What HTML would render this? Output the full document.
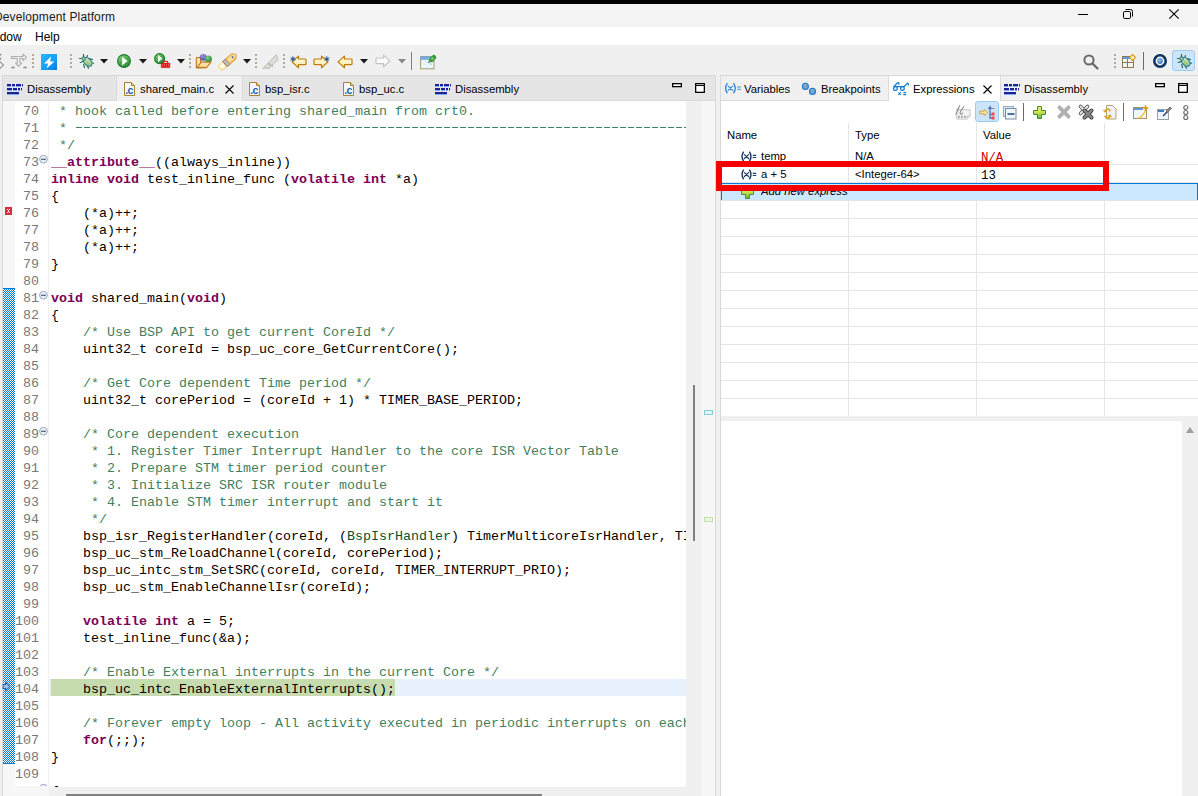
<!DOCTYPE html><html><head><meta charset="utf-8"><style>
*{margin:0;padding:0;box-sizing:border-box}
html,body{width:1198px;height:796px;overflow:hidden;background:#f0f0f0;font-family:"Liberation Sans",sans-serif;font-size:12px;color:#000;position:relative}
.a{position:absolute}
.tx{position:absolute;white-space:pre;line-height:14px;font-size:12px}
.cl{position:absolute;left:0;font-family:"Liberation Mono",monospace;font-size:13.3334px;line-height:17px;height:17px;white-space:pre}
.ln{color:#787878}
.k{color:#7f0055;font-weight:bold}
.c{color:#3f7f5f}
.t{color:#005032}
svg{position:absolute;overflow:visible}
</style></head><body>
<div class="a" style="left:0px;top:0px;width:1198px;height:4px;background:#000;"></div>
<div class="a" style="left:0px;top:4px;width:1198px;height:23px;background:#f3f3f3;"></div>
<div class="a" style="left:0px;top:27px;width:1198px;height:18px;background:#fff;"></div>
<div class="a" style="left:0px;top:45px;width:1198px;height:30px;background:#f0f0f0;"></div>
<div class="tx" style="left:-6px;top:10px;color:#1a1a1a;font-size:12px;letter-spacing:0.12px">Development Platform</div>
<svg style="left:1078px;top:14px;" width="10" height="1" viewBox="0 0 10 1"><rect x="0" y="0" width="10" height="1" fill="#000"/></svg>
<svg style="left:1123px;top:9px;" width="10" height="10" viewBox="0 0 10 10"><rect x="0.5" y="2.5" width="7" height="7" rx="1.3" fill="none" stroke="#000"/><path d="M2.5 0.5h5a2 2 0 0 1 2 2v5" fill="none" stroke="#000"/></svg>
<svg style="left:1169px;top:9px;" width="10" height="10" viewBox="0 0 10 10"><path d="M0.3 0.3L9.7 9.7M9.7 0.3L0.3 9.7" stroke="#000" stroke-width="1.1"/></svg>
<div class="tx" style="left:-21px;top:30px;">Window</div>
<div class="tx" style="left:35px;top:30px;">Help</div>
<div class="a" style="left:2px;top:75px;width:714px;height:26px;background:#e6e6e6;border-top:1px solid #d9d9d9;border-left:1px solid #d9d9d9;border-right:1px solid #d9d9d9"></div>
<div class="a" style="left:2px;top:101px;width:714px;height:695px;background:#fff;border-left:1px solid #d8d8d8;border-right:1px solid #d8d8d8"></div>
<div class="a" style="left:3px;top:101px;width:12px;height:685px;background:#f7f7f7;"></div>
<svg style="left:3px;top:288px" width="12" height="476"><defs><pattern id="chk" width="2" height="2" patternUnits="userSpaceOnUse"><rect width="2" height="2" fill="#fff"/><rect x="0" y="0" width="1" height="1" fill="#0078d7"/><rect x="1" y="1" width="1" height="1" fill="#0078d7"/></pattern></defs><rect width="12" height="476" fill="url(#chk)"/><rect width="12" height="1" fill="#0078d7"/><rect y="475" width="12" height="1" fill="#0078d7"/></svg>
<svg style="left:5px;top:207px;" width="7" height="8" viewBox="0 0 7 8"><rect width="7" height="8" fill="#d92b3f"/><rect x="2" y="2" width="1" height="1" fill="#fff"/><rect x="4" y="2" width="1" height="1" fill="#fff"/><rect x="3" y="3" width="1" height="2" fill="#fff"/><rect x="2" y="5" width="1" height="1" fill="#fff"/><rect x="4" y="5" width="1" height="1" fill="#fff"/></svg>
<svg style="left:2px;top:681px;" width="10" height="11" viewBox="0 0 10 11"><path d="M1 3.5H3.6V1L7.9 5.5L3.6 10V7.5H1Z" fill="#9fc0e6" stroke="#fff" stroke-width="1.6" stroke-linejoin="round"/><path d="M1 3.5H3.6V1L7.9 5.5L3.6 10V7.5H1Z" fill="#9fc0e6" stroke="#1f5da6" stroke-width="1.05" stroke-linejoin="round"/></svg>
<div class="a" style="left:38px;top:152px;width:11px;height:17px;overflow:hidden"><svg style="left:1px;top:2px" width="10" height="10"><circle cx="4.5" cy="5.2" r="3.9" fill="#e8eef5" stroke="#9aaabe" stroke-width="1"/><path d="M2.1 5.3H6.9" stroke="#4a5870" stroke-width="1.15"/></svg></div>
<div class="a" style="left:38px;top:288px;width:11px;height:17px;overflow:hidden"><svg style="left:1px;top:2px" width="10" height="10"><circle cx="4.5" cy="5.2" r="3.9" fill="#e8eef5" stroke="#9aaabe" stroke-width="1"/><path d="M2.1 5.3H6.9" stroke="#4a5870" stroke-width="1.15"/></svg></div>
<div class="a" style="left:38px;top:424px;width:11px;height:17px;overflow:hidden"><svg style="left:1px;top:2px" width="10" height="10"><circle cx="4.5" cy="5.2" r="3.9" fill="#e8eef5" stroke="#9aaabe" stroke-width="1"/><path d="M2.1 5.3H6.9" stroke="#4a5870" stroke-width="1.15"/></svg></div>
<div class="a" style="left:38px;top:781px;width:11px;height:5px;overflow:hidden"><svg style="left:1px;top:2px" width="10" height="10"><circle cx="4.5" cy="5.2" r="3.9" fill="#e8eef5" stroke="#9aaabe" stroke-width="1"/><path d="M2.1 5.3H6.9" stroke="#4a5870" stroke-width="1.15"/></svg></div>
<div class="a" style="left:48px;top:101px;width:1px;height:685px;background:#f0f0f0;"></div>
<div class="a" style="left:49px;top:679px;width:637px;height:17px;background:#e8f2fe;"></div>
<div class="a" style="left:51px;top:679px;width:344px;height:17px;background:#c6dbae;"></div>
<div class="a" style="left:0;top:0;width:1198px;height:786px;overflow:hidden">
<div class="cl ln" style="left:0;top:103px;width:39px;text-align:right">70</div>
<div class="cl ln" style="left:0;top:120px;width:39px;text-align:right">71</div>
<div class="cl ln" style="left:0;top:137px;width:39px;text-align:right">72</div>
<div class="cl ln" style="left:0;top:154px;width:39px;text-align:right">73</div>
<div class="cl ln" style="left:0;top:171px;width:39px;text-align:right">74</div>
<div class="cl ln" style="left:0;top:188px;width:39px;text-align:right">75</div>
<div class="cl ln" style="left:0;top:205px;width:39px;text-align:right">76</div>
<div class="cl ln" style="left:0;top:222px;width:39px;text-align:right">77</div>
<div class="cl ln" style="left:0;top:239px;width:39px;text-align:right">78</div>
<div class="cl ln" style="left:0;top:256px;width:39px;text-align:right">79</div>
<div class="cl ln" style="left:0;top:273px;width:39px;text-align:right">80</div>
<div class="cl ln" style="left:0;top:290px;width:39px;text-align:right">81</div>
<div class="cl ln" style="left:0;top:307px;width:39px;text-align:right">82</div>
<div class="cl ln" style="left:0;top:324px;width:39px;text-align:right">83</div>
<div class="cl ln" style="left:0;top:341px;width:39px;text-align:right">84</div>
<div class="cl ln" style="left:0;top:358px;width:39px;text-align:right">85</div>
<div class="cl ln" style="left:0;top:375px;width:39px;text-align:right">86</div>
<div class="cl ln" style="left:0;top:392px;width:39px;text-align:right">87</div>
<div class="cl ln" style="left:0;top:409px;width:39px;text-align:right">88</div>
<div class="cl ln" style="left:0;top:426px;width:39px;text-align:right">89</div>
<div class="cl ln" style="left:0;top:443px;width:39px;text-align:right">90</div>
<div class="cl ln" style="left:0;top:460px;width:39px;text-align:right">91</div>
<div class="cl ln" style="left:0;top:477px;width:39px;text-align:right">92</div>
<div class="cl ln" style="left:0;top:494px;width:39px;text-align:right">93</div>
<div class="cl ln" style="left:0;top:511px;width:39px;text-align:right">94</div>
<div class="cl ln" style="left:0;top:528px;width:39px;text-align:right">95</div>
<div class="cl ln" style="left:0;top:545px;width:39px;text-align:right">96</div>
<div class="cl ln" style="left:0;top:562px;width:39px;text-align:right">97</div>
<div class="cl ln" style="left:0;top:579px;width:39px;text-align:right">98</div>
<div class="cl ln" style="left:0;top:596px;width:39px;text-align:right">99</div>
<div class="cl ln" style="left:0;top:613px;width:39px;text-align:right">100</div>
<div class="cl ln" style="left:0;top:630px;width:39px;text-align:right">101</div>
<div class="cl ln" style="left:0;top:647px;width:39px;text-align:right">102</div>
<div class="cl ln" style="left:0;top:664px;width:39px;text-align:right">103</div>
<div class="cl ln" style="left:0;top:681px;width:39px;text-align:right">104</div>
<div class="cl ln" style="left:0;top:698px;width:39px;text-align:right">105</div>
<div class="cl ln" style="left:0;top:715px;width:39px;text-align:right">106</div>
<div class="cl ln" style="left:0;top:732px;width:39px;text-align:right">107</div>
<div class="cl ln" style="left:0;top:749px;width:39px;text-align:right">108</div>
<div class="cl ln" style="left:0;top:766px;width:39px;text-align:right">109</div>
<div class="cl ln" style="left:0;top:783px;width:39px;text-align:right">110</div>
</div>
<div class="a" style="left:49px;top:101px;width:637px;height:686px;overflow:hidden">
<div class="cl" style="left:2px;top:2px"><span class="c"> * hook called before entering shared_main from crt0.</span></div>
<div class="cl" style="left:2px;top:19px"><span class="c"> * </span></div>
<div class="cl" style="left:2px;top:36px"><span class="c"> */</span></div>
<div class="cl" style="left:2px;top:53px"><span class="k">__attribute__</span>((always_inline))</div>
<div class="cl" style="left:2px;top:70px"><span class="k">inline</span> <span class="k">void</span> test_inline_func (<span class="k">volatile</span> <span class="k">int</span> *a)</div>
<div class="cl" style="left:2px;top:87px">{</div>
<div class="cl" style="left:2px;top:104px">    (*a)++;</div>
<div class="cl" style="left:2px;top:121px">    (*a)++;</div>
<div class="cl" style="left:2px;top:138px">    (*a)++;</div>
<div class="cl" style="left:2px;top:155px">}</div>
<div class="cl" style="left:2px;top:172px"></div>
<div class="cl" style="left:2px;top:189px"><span class="k">void</span> shared_main(<span class="k">void</span>)</div>
<div class="cl" style="left:2px;top:206px">{</div>
<div class="cl" style="left:2px;top:223px">    <span class="c">/* Use BSP API to get current CoreId */</span></div>
<div class="cl" style="left:2px;top:240px">    uint32_t coreId = bsp_uc_core_GetCurrentCore();</div>
<div class="cl" style="left:2px;top:257px"></div>
<div class="cl" style="left:2px;top:274px">    <span class="c">/* Get Core dependent Time period */</span></div>
<div class="cl" style="left:2px;top:291px">    uint32_t corePeriod = (coreId + 1) * TIMER_BASE_PERIOD;</div>
<div class="cl" style="left:2px;top:308px"></div>
<div class="cl" style="left:2px;top:325px">    <span class="c">/* Core dependent execution</span></div>
<div class="cl" style="left:2px;top:342px"><span class="c">     * 1. Register Timer Interrupt Handler to the core ISR Vector Table</span></div>
<div class="cl" style="left:2px;top:359px"><span class="c">     * 2. Prepare STM timer period counter</span></div>
<div class="cl" style="left:2px;top:376px"><span class="c">     * 3. Initialize SRC ISR router module</span></div>
<div class="cl" style="left:2px;top:393px"><span class="c">     * 4. Enable STM timer interrupt and start it</span></div>
<div class="cl" style="left:2px;top:410px"><span class="c">     */</span></div>
<div class="cl" style="left:2px;top:427px">    bsp_isr_RegisterHandler(coreId, (<span class="t">BspIsrHandler</span>) TimerMulticoreIsrHandler, TIMER_INTERRUPT_PRIO);</div>
<div class="cl" style="left:2px;top:444px">    bsp_uc_stm_ReloadChannel(coreId, corePeriod);</div>
<div class="cl" style="left:2px;top:461px">    bsp_uc_intc_stm_SetSRC(coreId, coreId, TIMER_INTERRUPT_PRIO);</div>
<div class="cl" style="left:2px;top:478px">    bsp_uc_stm_EnableChannelIsr(coreId);</div>
<div class="cl" style="left:2px;top:495px"></div>
<div class="cl" style="left:2px;top:512px">    <span class="k">volatile</span> <span class="k">int</span> a = 5;</div>
<div class="cl" style="left:2px;top:529px">    test_inline_func(&amp;a);</div>
<div class="cl" style="left:2px;top:546px"></div>
<div class="cl" style="left:2px;top:563px">    <span class="c">/* Enable External interrupts in the current Core */</span></div>
<div class="cl" style="left:2px;top:580px">    bsp_uc_intc_EnableExternalInterrupts();</div>
<div class="cl" style="left:2px;top:597px"></div>
<div class="cl" style="left:2px;top:614px">    <span class="c">/* Forever empty loop - All activity executed in periodic interrupts on each core */</span></div>
<div class="cl" style="left:2px;top:631px">    <span class="k">for</span>(;;);</div>
<div class="cl" style="left:2px;top:648px">}</div>
<div class="cl" style="left:2px;top:665px"></div>
<div class="cl" style="left:2px;top:682px">{</div>
</div>
<div class="a" style="left:75px;top:127px;width:611px;height:1px;background:repeating-linear-gradient(90deg,transparent 0 1px,#3f7f5f 1px 7px,transparent 7px 8px);"></div>
<div class="a" style="left:49px;top:787px;width:637px;height:9px;background:#f0f0f0;"></div>
<div class="a" style="left:3px;top:786px;width:46px;height:10px;background:#f7f7f7;"></div>
<div class="a" style="left:686px;top:101px;width:16px;height:695px;background:#f0f0f0;"></div>
<div class="a" style="left:702px;top:101px;width:13px;height:695px;background:#f7f7f7;"></div>
<div class="a" style="left:693px;top:385px;width:2px;height:156px;background:#808080;"></div>
<div class="a" style="left:66px;top:794px;width:476px;height:2px;background:#808080;"></div>
<div class="a" style="left:716px;top:75px;width:4px;height:721px;background:#f0f0f0;"></div>
<div class="a" style="left:720px;top:75px;width:478px;height:26px;background:#f0f0f0;border-top:1px solid #d9d9d9;border-left:1px solid #d9d9d9"></div>
<div class="a" style="left:720px;top:101px;width:478px;height:695px;background:#fff;border-left:1px solid #d8d8d8"></div>
<div class="a" style="left:3px;top:76px;width:712px;height:25px;background:#e5e5e5;border-bottom:1px solid #dadada"></div>
<div class="a" style="left:116px;top:76px;width:127px;height:25px;background:#f0f0f0;border-left:1px solid #dadada;border-right:1px solid #dadada"></div>
<svg style="left:7px;top:78px;" width="17" height="18" viewBox="0 0 17 18"><rect x="0" y="6" width="4" height="2" fill="#1f1f9a"/><rect x="0" y="8" width="4" height="1" fill="#79aef0"/><rect x="5" y="6" width="3" height="2" fill="#1f1f9a"/><rect x="5" y="8" width="3" height="1" fill="#79aef0"/><rect x="9" y="6" width="3" height="2" fill="#1f1f9a"/><rect x="9" y="8" width="3" height="1" fill="#79aef0"/><rect x="12" y="6" width="2" height="2" fill="#1f1f9a"/><rect x="12" y="8" width="2" height="1" fill="#79aef0"/><rect x="15" y="6" width="1" height="2" fill="#1f1f9a"/><rect x="15" y="8" width="1" height="1" fill="#79aef0"/><rect x="0" y="10" width="5" height="2" fill="#1f1f9a"/><rect x="0" y="12" width="5" height="1" fill="#79aef0"/><rect x="6" y="10" width="4" height="2" fill="#1f1f9a"/><rect x="6" y="12" width="4" height="1" fill="#79aef0"/><rect x="11" y="10" width="2" height="2" fill="#1f1f9a"/><rect x="11" y="12" width="2" height="1" fill="#79aef0"/><rect x="14" y="10" width="1" height="2" fill="#1f1f9a"/><rect x="14" y="12" width="1" height="1" fill="#79aef0"/><rect x="0" y="14" width="12" height="2" fill="#1f1f9a"/><rect x="0" y="16" width="12" height="1" fill="#79aef0"/></svg>
<div class="tx" style="left:27px;top:82px;font-size:11.3px;">Disassembly</div>
<svg style="left:124px;top:82px;" width="11" height="14" viewBox="0 0 11 14"><path d="M0.5 0.5H7.5L10.5 3.5V13.5H0.5Z" fill="#f4f8fe" stroke="#a8842f"/><path d="M7.5 0.5V3.5H10.5" fill="#e6c77a" stroke="#a8842f"/><text x="1.2" y="11.6" font-family="Liberation Sans" font-weight="bold" font-size="10.5" fill="#1d5aa6" letter-spacing="-0.5">.c</text></svg>
<div class="tx" style="left:140px;top:82px;font-size:11.3px;">shared_main.c</div>
<svg style="left:225px;top:85px;" width="9" height="9" viewBox="0 0 9 9"><path d="M0.5 0.5L8.5 8.5M8.5 0.5L0.5 8.5" stroke="#000" stroke-width="1.1"/></svg>
<svg style="left:249px;top:82px;" width="11" height="14" viewBox="0 0 11 14"><path d="M0.5 0.5H7.5L10.5 3.5V13.5H0.5Z" fill="#f4f8fe" stroke="#a8842f"/><path d="M7.5 0.5V3.5H10.5" fill="#e6c77a" stroke="#a8842f"/><text x="1.2" y="11.6" font-family="Liberation Sans" font-weight="bold" font-size="10.5" fill="#1d5aa6" letter-spacing="-0.5">.c</text></svg>
<div class="tx" style="left:265px;top:82px;font-size:11.3px;">bsp_isr.c</div>
<svg style="left:343px;top:82px;" width="11" height="14" viewBox="0 0 11 14"><path d="M0.5 0.5H7.5L10.5 3.5V13.5H0.5Z" fill="#f4f8fe" stroke="#a8842f"/><path d="M7.5 0.5V3.5H10.5" fill="#e6c77a" stroke="#a8842f"/><text x="1.2" y="11.6" font-family="Liberation Sans" font-weight="bold" font-size="10.5" fill="#1d5aa6" letter-spacing="-0.5">.c</text></svg>
<div class="tx" style="left:359px;top:82px;font-size:11.3px;">bsp_uc.c</div>
<svg style="left:435px;top:78px;" width="17" height="18" viewBox="0 0 17 18"><rect x="0" y="6" width="4" height="2" fill="#1f1f9a"/><rect x="0" y="8" width="4" height="1" fill="#79aef0"/><rect x="5" y="6" width="3" height="2" fill="#1f1f9a"/><rect x="5" y="8" width="3" height="1" fill="#79aef0"/><rect x="9" y="6" width="3" height="2" fill="#1f1f9a"/><rect x="9" y="8" width="3" height="1" fill="#79aef0"/><rect x="12" y="6" width="2" height="2" fill="#1f1f9a"/><rect x="12" y="8" width="2" height="1" fill="#79aef0"/><rect x="15" y="6" width="1" height="2" fill="#1f1f9a"/><rect x="15" y="8" width="1" height="1" fill="#79aef0"/><rect x="0" y="10" width="5" height="2" fill="#1f1f9a"/><rect x="0" y="12" width="5" height="1" fill="#79aef0"/><rect x="6" y="10" width="4" height="2" fill="#1f1f9a"/><rect x="6" y="12" width="4" height="1" fill="#79aef0"/><rect x="11" y="10" width="2" height="2" fill="#1f1f9a"/><rect x="11" y="12" width="2" height="1" fill="#79aef0"/><rect x="14" y="10" width="1" height="2" fill="#1f1f9a"/><rect x="14" y="12" width="1" height="1" fill="#79aef0"/><rect x="0" y="14" width="12" height="2" fill="#1f1f9a"/><rect x="0" y="16" width="12" height="1" fill="#79aef0"/></svg>
<div class="tx" style="left:455px;top:82px;font-size:11.3px;">Disassembly</div>
<svg style="left:672px;top:83px;" width="10" height="5" viewBox="0 0 10 5"><rect x="0.65" y="0.65" width="8.7" height="3" fill="#fff" stroke="#000" stroke-width="1.3"/></svg>
<svg style="left:695px;top:83px;" width="10" height="10" viewBox="0 0 10 10"><rect x="0.65" y="0.65" width="8.7" height="8.7" fill="#fff" stroke="#000" stroke-width="1.3"/><rect x="0" y="2" width="10" height="1" fill="#000"/></svg>
<div class="a" style="left:721px;top:76px;width:477px;height:25px;background:#f0f0f0;border-bottom:1px solid #dadada"></div>
<div class="a" style="left:888px;top:76px;width:113px;height:25px;background:#ffffff;border-left:1px solid #dadada;border-right:1px solid #dadada"></div>
<svg style="left:724px;top:81px;" width="18" height="13" viewBox="0 0 18 13"><g transform="translate(-0.6 0.2) scale(1.08)" fill="none" stroke="#3a8dd3" stroke-linecap="round"><path d="M3.4 2.2Q0.6 6.5 3.4 10.8M9.6 2.2Q12.4 6.5 9.6 10.8" stroke-width="1.3"/><path d="M4.4 4.6L8.6 8.5M8.6 4.6L4.4 8.5" stroke-width="1.1"/><path d="M13.2 5.4H15.8M13.2 7.5H15.8" stroke-width="1"/></g></svg>
<div class="tx" style="left:744px;top:82px;font-size:11.3px;">Variables</div>
<svg style="left:801px;top:82px;" width="16" height="14" viewBox="0 0 16 14"><defs><linearGradient id="bp" x1="0" y1="0" x2="0" y2="1"><stop offset="0" stop-color="#a8cce8"/><stop offset="0.5" stop-color="#6a9ecc"/><stop offset="1" stop-color="#8ab6dc"/></linearGradient></defs><circle cx="4.4" cy="4.4" r="3" fill="url(#bp)" stroke="#1f78c8" stroke-width="1.1"/><circle cx="11.5" cy="9.4" r="3" fill="url(#bp)" stroke="#1f78c8" stroke-width="1.1"/></svg>
<div class="tx" style="left:821px;top:82px;font-size:11.3px;">Breakpoints</div>
<svg style="left:893px;top:82px;" width="17" height="14" viewBox="0 0 17 14"><g fill="none" stroke="#1a7ac8" stroke-width="1.25"><rect x="0.6" y="4.7" width="3.6" height="3.6" rx="1.3" fill="#eaf6fd"/><rect x="7.6" y="4.7" width="3.6" height="3.6" rx="1.3" fill="#eaf6fd"/><path d="M0.6 4.7H11.2M0.8 4.5L4.6 0.8Q5.8 0 5.9 1.5V2.8M11.2 4.5L14.2 1.4Q15.2 0.8 15.4 2.2V3.6"/><path d="M5.4 10.4L7.8 12.8M7.8 10.4L5.4 12.8M10.4 10.6H13.2M10.4 12.6H13.2" stroke-width="1.1"/></g></svg>
<div class="tx" style="left:913px;top:82px;font-size:11.3px;">Expressions</div>
<svg style="left:983px;top:85px;" width="9" height="9" viewBox="0 0 9 9"><path d="M0.5 0.5L8.5 8.5M8.5 0.5L0.5 8.5" stroke="#000" stroke-width="1.1"/></svg>
<svg style="left:1004px;top:78px;" width="17" height="18" viewBox="0 0 17 18"><rect x="0" y="6" width="4" height="2" fill="#1f1f9a"/><rect x="0" y="8" width="4" height="1" fill="#79aef0"/><rect x="5" y="6" width="3" height="2" fill="#1f1f9a"/><rect x="5" y="8" width="3" height="1" fill="#79aef0"/><rect x="9" y="6" width="3" height="2" fill="#1f1f9a"/><rect x="9" y="8" width="3" height="1" fill="#79aef0"/><rect x="12" y="6" width="2" height="2" fill="#1f1f9a"/><rect x="12" y="8" width="2" height="1" fill="#79aef0"/><rect x="15" y="6" width="1" height="2" fill="#1f1f9a"/><rect x="15" y="8" width="1" height="1" fill="#79aef0"/><rect x="0" y="10" width="5" height="2" fill="#1f1f9a"/><rect x="0" y="12" width="5" height="1" fill="#79aef0"/><rect x="6" y="10" width="4" height="2" fill="#1f1f9a"/><rect x="6" y="12" width="4" height="1" fill="#79aef0"/><rect x="11" y="10" width="2" height="2" fill="#1f1f9a"/><rect x="11" y="12" width="2" height="1" fill="#79aef0"/><rect x="14" y="10" width="1" height="2" fill="#1f1f9a"/><rect x="14" y="12" width="1" height="1" fill="#79aef0"/><rect x="0" y="14" width="12" height="2" fill="#1f1f9a"/><rect x="0" y="16" width="12" height="1" fill="#79aef0"/></svg>
<div class="tx" style="left:1024px;top:82px;font-size:11.3px;">Disassembly</div>
<svg style="left:1155px;top:83px;" width="10" height="5" viewBox="0 0 10 5"><rect x="0.65" y="0.65" width="8.7" height="3" fill="#fff" stroke="#000" stroke-width="1.3"/></svg>
<svg style="left:1178px;top:83px;" width="10" height="10" viewBox="0 0 10 10"><rect x="0.65" y="0.65" width="8.7" height="8.7" fill="#fff" stroke="#000" stroke-width="1.3"/><rect x="0" y="2" width="10" height="1" fill="#000"/></svg>
<svg style="left:0px;top:53px;" width="6" height="17" viewBox="0 0 6 17"><rect x="0" y="0.8" width="1.2" height="1.8" fill="#8a8a8a"/><rect x="0" y="4.8" width="1.2" height="1.8" fill="#8a8a8a"/><path d="M-0.5 8.3L3.4 12L-0.5 15.8" fill="#fafafa" stroke="#9c9c9c" stroke-width="1.3"/></svg>
<svg style="left:10px;top:53px;" width="18" height="17" viewBox="0 0 18 17"><path d="M1.5 3.5H13V1.2L16.5 4.4L13 7.6V5.3H9.8V10H11.6L8.6 13.4L5.6 10H7.4V5.3H1.5Z" fill="#f8f8f8" stroke="#b0b0b0" stroke-width="1.15" stroke-linejoin="round"/><path d="M1 15.2A2 1.8 0 0 1 5 15.2Z" fill="#8c8c8c"/><path d="M13 15.2A2 1.8 0 0 1 17 15.2Z" fill="#8c8c8c"/></svg>
<svg style="left:32px;top:54px;" width="2" height="14" viewBox="0 0 2 14"><rect x="0" y="0" width="2" height="2" fill="#b5aa96"/><rect x="0" y="4" width="2" height="2" fill="#b5aa96"/><rect x="0" y="8" width="2" height="2" fill="#b5aa96"/><rect x="0" y="12" width="2" height="2" fill="#b5aa96"/></svg>
<svg style="left:41px;top:54px;" width="16" height="16" viewBox="0 0 16 16"><defs><linearGradient id="lg1" x1="0" y1="0" x2="1" y2="1"><stop offset="0" stop-color="#2ab6fb"/><stop offset="0.6" stop-color="#159ff5"/><stop offset="1" stop-color="#0778dc"/></linearGradient></defs><rect width="16" height="16" fill="url(#lg1)"/><path d="M10 2.5L3 9.5H7.2L5.5 14.5L13.5 7.5H9.2Z" fill="#fff"/></svg>
<svg style="left:70px;top:54px;" width="2" height="14" viewBox="0 0 2 14"><rect x="0" y="0" width="2" height="2" fill="#b5aa96"/><rect x="0" y="4" width="2" height="2" fill="#b5aa96"/><rect x="0" y="8" width="2" height="2" fill="#b5aa96"/><rect x="0" y="12" width="2" height="2" fill="#b5aa96"/></svg>
<svg style="left:79px;top:54px;" width="16" height="16" viewBox="0 0 16 16"><defs><linearGradient id="bg79" x1="0" y1="0" x2="1" y2="1"><stop offset="0" stop-color="#e6f2d8"/><stop offset="0.6" stop-color="#a8cf8a"/><stop offset="1" stop-color="#6fa860"/></linearGradient></defs><g stroke="#2a6e5c" stroke-width="1.2" fill="none" stroke-linecap="round"><path d="M4.5 0.4V3.5M8.4 1.5L7.8 3.5M0.4 4.5H3.5M10.5 4.6L13.5 5.5M1.3 8.5L4 7.5M12 8.5L14.6 9.3M4.6 10.6L5.5 13.6M8.3 12L9.5 14.3"/></g><ellipse cx="8.6" cy="7.9" rx="5.2" ry="3.4" transform="rotate(45 8.6 7.9)" fill="url(#bg79)" stroke="#1f7a9a" stroke-width="1.1"/><circle cx="4.6" cy="4.6" r="1.7" fill="#b9dca0" stroke="#1f6a6a" stroke-width="1"/><path d="M6.5 6.5L11 10.5" stroke="#8cbf70" stroke-width="0.8"/></svg>
<svg style="left:100px;top:59px;" width="8" height="5" viewBox="0 0 8 5"><path d="M0 0H8L4 4.5Z" fill="#1a1a1a"/></svg>
<svg style="left:117px;top:54px;" width="14" height="14" viewBox="0 0 14 14"><defs><linearGradient id="rg117" x1="0.2" y1="0" x2="0.8" y2="1"><stop offset="0" stop-color="#8ad878"/><stop offset="0.5" stop-color="#4aa84a"/><stop offset="1" stop-color="#2a8a3a"/></linearGradient></defs><circle cx="7" cy="7" r="6.4" fill="url(#rg117)" stroke="#1d7a32" stroke-width="1.1"/><path d="M5.1 2.7L10.6 7.0L5.1 11.6Z" fill="#fff"/></svg>
<svg style="left:139px;top:59px;" width="8" height="5" viewBox="0 0 8 5"><path d="M0 0H8L4 4.5Z" fill="#1a1a1a"/></svg>
<svg style="left:154px;top:53px;" width="11.2" height="11.2" viewBox="0 0 11.2 11.2"><defs><linearGradient id="rg154" x1="0.2" y1="0" x2="0.8" y2="1"><stop offset="0" stop-color="#8ad878"/><stop offset="0.5" stop-color="#4aa84a"/><stop offset="1" stop-color="#2a8a3a"/></linearGradient></defs><circle cx="5.6" cy="5.6" r="5.0" fill="url(#rg154)" stroke="#1d7a32" stroke-width="1.1"/><path d="M4.079999999999999 2.16L8.479999999999999 5.6L4.079999999999999 9.28Z" fill="#fff"/></svg>
<svg style="left:161px;top:61px;" width="9" height="7" viewBox="0 0 9 7"><path d="M2.3 0.3H6.7V2.3H8.8V6.6H0.3V2.3H2.3Z" fill="#e41414" stroke="#c00000" stroke-width="0.6"/><rect x="3" y="1" width="3" height="1" fill="#ffd0d0"/><path d="M1 3.6H8M1 5.2H8" stroke="#ff9a9a" stroke-width="0.6" stroke-dasharray="1 1"/></svg>
<svg style="left:177px;top:59px;" width="8" height="5" viewBox="0 0 8 5"><path d="M0 0H8L4 4.5Z" fill="#1a1a1a"/></svg>
<svg style="left:189px;top:54px;" width="2" height="14" viewBox="0 0 2 14"><rect x="0" y="0" width="2" height="2" fill="#b5aa96"/><rect x="0" y="4" width="2" height="2" fill="#b5aa96"/><rect x="0" y="8" width="2" height="2" fill="#b5aa96"/><rect x="0" y="12" width="2" height="2" fill="#b5aa96"/></svg>
<svg style="left:195px;top:53px;" width="19" height="16" viewBox="0 0 19 16"><defs><radialGradient id="sp1" cx="0.4" cy="0.3" r="0.7"><stop offset="0" stop-color="#a89ae0"/><stop offset="1" stop-color="#5a48a8"/></radialGradient><radialGradient id="sp2" cx="0.4" cy="0.3" r="0.7"><stop offset="0" stop-color="#7fd08a"/><stop offset="1" stop-color="#1f8a38"/></radialGradient><linearGradient id="fd" x1="0" y1="0" x2="0" y2="1"><stop offset="0" stop-color="#fff3c8"/><stop offset="1" stop-color="#f2cc78"/></linearGradient></defs><path d="M1.3 5.5Q1.3 4.6 2.2 4.6H4.8L5.6 5.4V14.8H1.3Z" fill="url(#fd)" stroke="#c07818" stroke-width="1.1"/><circle cx="8.2" cy="4.3" r="3.4" fill="url(#sp1)"/><circle cx="13.4" cy="6.1" r="3.5" fill="url(#sp2)"/><path d="M6.3 9.1H15.9L11.7 14.5H2.1Z" fill="url(#fd)" stroke="#c07818" stroke-width="1.1" stroke-linejoin="round"/><path d="M1.3 14.8H11.7" stroke="#c07818" stroke-width="1.1"/></svg>
<svg style="left:219px;top:53px;" width="18" height="17" viewBox="0 0 18 17"><defs><linearGradient id="tipg" x1="0" y1="0" x2="1" y2="0"><stop offset="0" stop-color="#fff8b0"/><stop offset="0.6" stop-color="#ffffff"/><stop offset="1" stop-color="#f8e0a0"/></linearGradient><linearGradient id="bodg" x1="0" y1="0" x2="0" y2="1"><stop offset="0" stop-color="#f8c060"/><stop offset="0.5" stop-color="#fde7b0"/><stop offset="1" stop-color="#f0b050"/></linearGradient></defs><g transform="translate(9 8.4) rotate(-41)"><path d="M-10.5 -2.6Q-11 0 -10.5 2.6L-4 3.4V-3.4Z" fill="url(#tipg)" stroke="#f0c050" stroke-width="0.8"/><rect x="-4" y="-3.5" width="4" height="7" fill="#bdb8c0" stroke="#9a8058" stroke-width="0.9"/><path d="M0 -3.5H7.5L10.8 0L7.5 3.5H0Z" fill="url(#bodg)" stroke="#e0a040" stroke-width="0.9"/><circle cx="6.2" cy="-0.2" r="0.9" fill="#2a5ab8"/></g></svg>
<svg style="left:243px;top:59px;" width="8" height="5" viewBox="0 0 8 5"><path d="M0 0H8L4 4.5Z" fill="#1a1a1a"/></svg>
<svg style="left:255px;top:54px;" width="2" height="14" viewBox="0 0 2 14"><rect x="0" y="0" width="2" height="2" fill="#b5aa96"/><rect x="0" y="4" width="2" height="2" fill="#b5aa96"/><rect x="0" y="8" width="2" height="2" fill="#b5aa96"/><rect x="0" y="12" width="2" height="2" fill="#b5aa96"/></svg>
<svg style="left:262px;top:54px;" width="17" height="15" viewBox="0 0 17 15"><path d="M14.5 0.5L16 6L7 14H1Z" fill="#dcdcd8" stroke="#c0c0bb"/><path d="M6 9.5l5 3" stroke="#b9b9b0" stroke-width="1.5"/><path d="M0 14.5h8" stroke="#c8c8c8"/></svg>
<svg style="left:283px;top:54px;" width="2" height="14" viewBox="0 0 2 14"><rect x="0" y="0" width="2" height="2" fill="#b5aa96"/><rect x="0" y="4" width="2" height="2" fill="#b5aa96"/><rect x="0" y="8" width="2" height="2" fill="#b5aa96"/><rect x="0" y="12" width="2" height="2" fill="#b5aa96"/></svg>
<svg style="left:290.5px;top:55px;" width="16" height="14" viewBox="0 0 16 14"><defs><linearGradient id="arg" x1="0" y1="0" x2="0" y2="1"><stop offset="0" stop-color="#fffbe0"/><stop offset="1" stop-color="#fce9a8"/></linearGradient></defs><path d="M1 6.9L7.5 1.1V4H14.3Q15 4 15 4.7V8.9Q15 9.6 14.3 9.6H7.5V12.8Z" fill="url(#arg)" stroke="#c27a0a" stroke-width="1.2" stroke-linejoin="round"/><path d="M1.9 1.3V6.7M-0.5 2.6L4.3 5.4M-0.5 5.4L4.3 2.6" stroke="#2c5a94" stroke-width="1.05"/></svg>
<svg style="left:312.5px;top:55px;" width="16" height="14" viewBox="0 0 16 14"><defs><linearGradient id="arg" x1="0" y1="0" x2="0" y2="1"><stop offset="0" stop-color="#fffbe0"/><stop offset="1" stop-color="#fce9a8"/></linearGradient></defs><path d="M15 6.9L8.5 1.1V4H1.7Q1 4 1 4.7V8.9Q1 9.6 1.7 9.6H8.5V12.8Z" fill="url(#arg)" stroke="#c27a0a" stroke-width="1.2" stroke-linejoin="round"/><path d="M13.9 1.3V6.7M11.5 2.6L16.3 5.4M11.5 5.4L16.3 2.6" stroke="#2c5a94" stroke-width="1.05"/></svg>
<svg style="left:337px;top:55px;" width="16" height="14" viewBox="0 0 16 14"><defs><linearGradient id="arg" x1="0" y1="0" x2="0" y2="1"><stop offset="0" stop-color="#fffbe0"/><stop offset="1" stop-color="#fce9a8"/></linearGradient></defs><path d="M1 6.9L7.5 1.1V4H14.3Q15 4 15 4.7V8.9Q15 9.6 14.3 9.6H7.5V12.8Z" fill="url(#arg)" stroke="#c27a0a" stroke-width="1.2" stroke-linejoin="round"/></svg>
<svg style="left:360px;top:59px;" width="8" height="5" viewBox="0 0 8 5"><path d="M0 0H8L4 4.5Z" fill="#1a1a1a"/></svg>
<svg style="left:375px;top:54px;" width="16" height="14" viewBox="0 0 16 14"><defs><linearGradient id="arg" x1="0" y1="0" x2="0" y2="1"><stop offset="0" stop-color="#fffbe0"/><stop offset="1" stop-color="#fce9a8"/></linearGradient></defs><path d="M15 6.9L8.5 1.1V4H1.7Q1 4 1 4.7V8.9Q1 9.6 1.7 9.6H8.5V12.8Z" fill="#fafafa" stroke="#c4c4c4" stroke-width="1.2" stroke-linejoin="round"/></svg>
<svg style="left:398px;top:59px;" width="8" height="5" viewBox="0 0 8 5"><path d="M0 0H8L4 4.5Z" fill="#8a8a8a"/></svg>
<div class="a" style="left:411px;top:52px;width:1px;height:18px;background:#808080;"></div>
<svg style="left:420px;top:55px;" width="17" height="15" viewBox="0 0 17 15"><defs><linearGradient id="wtb" x1="0" y1="0" x2="0" y2="1"><stop offset="0" stop-color="#3f7cc4"/><stop offset="0.5" stop-color="#8cc4ec"/><stop offset="1" stop-color="#4a88c8"/></linearGradient></defs><rect x="0.6" y="1.9" width="13.4" height="11.9" fill="#e6f6fc" stroke="#a89a70" stroke-width="1"/><rect x="0.2" y="1.6" width="14.2" height="3" fill="url(#wtb)"/><path d="M9.6 6.4L8.2 7.7" stroke="#303030" stroke-width="1.1"/><path d="M9.8 7.6L11.5 10" stroke="#a8c8d8" stroke-width="1"/><g transform="rotate(-45 12.5 3.6)"><rect x="8.6" y="1.4" width="8" height="4.6" rx="2" fill="#2f9a3a"/><rect x="11" y="2.4" width="3" height="2.4" fill="#7cc850"/></g></svg>
<svg style="left:1083px;top:54px;" width="16" height="16" viewBox="0 0 16 16"><circle cx="6" cy="6" r="4.6" fill="none" stroke="#6a6a6a" stroke-width="2"/><path d="M9.4 9.4L14.5 14.5" stroke="#6a6a6a" stroke-width="2.2" stroke-linecap="round"/></svg>
<svg style="left:1114px;top:54px;" width="2" height="14" viewBox="0 0 2 14"><rect x="0" y="0" width="2" height="2" fill="#b5aa96"/><rect x="0" y="4" width="2" height="2" fill="#b5aa96"/><rect x="0" y="8" width="2" height="2" fill="#b5aa96"/><rect x="0" y="12" width="2" height="2" fill="#b5aa96"/></svg>
<svg style="left:1122px;top:54px;" width="15" height="15" viewBox="0 0 15 15"><rect x="0.5" y="2.5" width="11" height="11" fill="#f2f6ee" stroke="#8a7a5a"/><rect x="1" y="3" width="10" height="2" fill="#5c9ad8"/><path d="M0.5 8.5H11.5M5.5 5v8.5" stroke="#8a7a5a"/><path d="M10.5 0.5L13.5 3.5L10.5 6.5L7.5 3.5Z" fill="#fff2c0" stroke="#d8a020" stroke-width="1.2"/></svg>
<div class="a" style="left:1143px;top:52px;width:1px;height:18px;background:#6a6a6a;"></div>
<svg style="left:1153px;top:54px;" width="15" height="15" viewBox="0 0 15 15"><defs><radialGradient id="rgb" cx="0.4" cy="0.4" r="0.6"><stop offset="0" stop-color="#9cc4ea"/><stop offset="1" stop-color="#3a78c0"/></radialGradient></defs><circle cx="7" cy="7" r="7" fill="#0c3566"/><circle cx="7" cy="7" r="4.4" fill="#fff"/><circle cx="7" cy="7" r="2.9" fill="url(#rgb)"/></svg>
<div class="a" style="left:1172px;top:50px;width:23px;height:21px;background:#cce4f7;border:1px solid #99cdf2;border-radius:3px"></div>
<svg style="left:1177px;top:54px;" width="16" height="16" viewBox="0 0 16 16"><defs><linearGradient id="bg1177" x1="0" y1="0" x2="1" y2="1"><stop offset="0" stop-color="#e6f2d8"/><stop offset="0.6" stop-color="#a8cf8a"/><stop offset="1" stop-color="#6fa860"/></linearGradient></defs><g stroke="#2a6e5c" stroke-width="1.2" fill="none" stroke-linecap="round"><path d="M4.5 0.4V3.5M8.4 1.5L7.8 3.5M0.4 4.5H3.5M10.5 4.6L13.5 5.5M1.3 8.5L4 7.5M12 8.5L14.6 9.3M4.6 10.6L5.5 13.6M8.3 12L9.5 14.3"/></g><ellipse cx="8.6" cy="7.9" rx="5.2" ry="3.4" transform="rotate(45 8.6 7.9)" fill="url(#bg1177)" stroke="#1f7a9a" stroke-width="1.1"/><circle cx="4.6" cy="4.6" r="1.7" fill="#b9dca0" stroke="#1f6a6a" stroke-width="1"/><path d="M6.5 6.5L11 10.5" stroke="#8cbf70" stroke-width="0.8"/></svg>
<svg style="left:955px;top:105px;" width="17" height="16" viewBox="0 0 17 16"><path d="M1.8 4.8H15.1V11L12 14.1H1.8Z" fill="#f4f4f4" stroke="#c6c6c6"/><path d="M12 14.1V11H15.1" fill="#dcdcdc" stroke="#c6c6c6" stroke-width="0.8"/><rect x="3" y="10.8" width="1.8" height="2" fill="#a4a4a4"/><rect x="6" y="10.8" width="1.8" height="2" fill="#a4a4a4"/><rect x="9" y="10.8" width="1.8" height="2" fill="#a4a4a4"/><path d="M0.5 9.6C2.2 7.5 3.4 4 4.4 0.9Q4.8 0.3 5 1.2" fill="none" stroke="#8c8c8c" stroke-width="1.1"/><path d="M9 1.3L5.6 6.2Q4.4 8.8 6 9.2Q7 9.3 7.9 7.8" fill="none" stroke="#8c8c8c" stroke-width="1.1"/><path d="M1.5 4.2H3.8" stroke="#8c8c8c" stroke-width="0.9"/></svg>
<div class="a" style="left:975px;top:101px;width:24px;height:21px;background:#cce4f7;border:1px solid #99cdf2;border-radius:3px"></div>
<svg style="left:979px;top:104px;" width="16" height="16" viewBox="0 0 16 16"><path d="M0.5 7.2H5.2V5.2L8.8 8.5L5.2 11.8V9.8H0.5Z" fill="#f6e4a6" stroke="#caa24a" stroke-width="0.9"/><path d="M11 15V3M11 10.5H13M11 14H13" stroke="#4d6ea8" stroke-width="1.2" fill="none"/><path d="M8.8 5L11 1.5L13.2 5Z" fill="#4d6ea8"/><rect x="12.5" y="8.5" width="3" height="3" fill="#e84a5a"/><rect x="12.5" y="12.5" width="3" height="3" fill="#e84a5a"/><path d="M12.5 4.5h3" stroke="#7a8aa8"/></svg>
<svg style="left:1003px;top:106px;" width="14" height="14" viewBox="0 0 14 14"><rect x="0.5" y="0.5" width="10" height="10" fill="#dceaf8" stroke="#98a8c8"/><rect x="2.5" y="2.5" width="10.5" height="10.5" fill="#eef6fc" stroke="#7a8aa8"/><path d="M4.5 8h7" stroke="#0d3a70" stroke-width="1.4"/></svg>
<div class="a" style="left:1023px;top:103px;width:1px;height:18px;background:#6a6a6a;"></div>
<svg style="left:1033px;top:106px;" width="14" height="14" viewBox="0 0 14 14"><defs><linearGradient id="pg" x1="0" y1="0" x2="0" y2="1"><stop offset="0" stop-color="#eef070"/><stop offset="0.5" stop-color="#c8e050"/><stop offset="1" stop-color="#5cb830"/></linearGradient></defs><path d="M4.5 0.5h4v4h4v4h-4v4h-4v-4h-4v-4h4Z" fill="url(#pg)" stroke="#4a8a3a"/></svg>
<svg style="left:1057px;top:105px;" width="14" height="14" viewBox="0 0 14 14"><path d="M2.5 2.5L11.5 11.5M11.5 2.5L2.5 11.5" stroke="#bdbdbd" stroke-width="4.2" stroke-linecap="round"/><path d="M2.5 2.5L11.5 11.5M11.5 2.5L2.5 11.5" stroke="#b0b0b0" stroke-width="2.6" stroke-linecap="round"/></svg>
<svg style="left:1078px;top:104px;" width="16" height="16" viewBox="0 0 16 16"><path d="M2.5 2.5L9.5 9.5M9.5 2.5L2.5 9.5" stroke="#505050" stroke-width="3.6" stroke-linecap="round"/><path d="M2.5 2.5L9.5 9.5M9.5 2.5L2.5 9.5" stroke="#e8e8e8" stroke-width="2" stroke-linecap="round"/><path d="M6.5 6.5L13.5 13.5M13.5 6.5L6.5 13.5" stroke="#404040" stroke-width="4" stroke-linecap="round"/><path d="M6.5 6.5L13.5 13.5M13.5 6.5L6.5 13.5" stroke="#8a8a8a" stroke-width="2.4" stroke-linecap="round"/></svg>
<svg style="left:1102px;top:105px;" width="15" height="15" viewBox="0 0 15 15"><path d="M4.5 0.5h6l3.5 3.5v10H4.5Z" fill="#eef3fa" stroke="#b8a070"/><path d="M3 6.5a2.5 2.5 0 0 1 5 0M3 10.5a2.5 2.5 0 0 0 5 0" fill="none" stroke="#e0a020" stroke-width="1.4"/><path d="M1.5 5l1.5 2 2-1.5M9.5 12l-1.5-2-2 1.5" fill="none" stroke="#e0a020" stroke-width="1.2"/></svg>
<div class="a" style="left:1123px;top:103px;width:1px;height:18px;background:#6a6a6a;"></div>
<svg style="left:1133px;top:105px;" width="16" height="15" viewBox="0 0 16 15"><rect x="0.5" y="2.5" width="13" height="11" fill="#f0f6fc" stroke="#a89060"/><rect x="1" y="3" width="9" height="2" fill="#5c9ad8"/><path d="M4 13.5c4-1 7-3 8.5-9" fill="none" stroke="#f0c040" stroke-width="1.2"/><path d="M12.5 0v6M9.5 3h6" stroke="#d8a020" stroke-width="1.4"/></svg>
<svg style="left:1157px;top:106px;" width="15" height="14" viewBox="0 0 15 14"><rect x="0.5" y="3.5" width="11" height="10" fill="#eef4fb" stroke="#9aa0a8"/><rect x="1" y="4" width="6" height="2" fill="#3d7ac0"/><path d="M6 10l4-4" stroke="#1a3a70" stroke-width="1.2"/><path d="M9 5l4-4 1.5 1.5-4 4Z" fill="#8a8a8a" stroke="#606060" stroke-width="0.8"/></svg>
<svg style="left:1183px;top:105px;" width="6" height="15" viewBox="0 0 6 15"><circle cx="2.8" cy="2.5" r="2" fill="none" stroke="#707070" stroke-width="1.2"/><circle cx="2.8" cy="7.5" r="2" fill="none" stroke="#707070" stroke-width="1.2"/><circle cx="2.8" cy="12.5" r="2" fill="none" stroke="#707070" stroke-width="1.2"/></svg>
<div class="a" style="left:848px;top:123px;width:1px;height:293px;background:#e5e5e5;"></div>
<div class="a" style="left:976px;top:123px;width:1px;height:293px;background:#e5e5e5;"></div>
<div class="a" style="left:1104px;top:123px;width:1px;height:293px;background:#e5e5e5;"></div>
<div class="a" style="left:721px;top:164px;width:477px;height:1px;background:#e5e5e5;"></div>
<div class="a" style="left:721px;top:182px;width:477px;height:1px;background:#e5e5e5;"></div>
<div class="a" style="left:721px;top:200px;width:477px;height:1px;background:#e5e5e5;"></div>
<div class="a" style="left:721px;top:218px;width:477px;height:1px;background:#e5e5e5;"></div>
<div class="a" style="left:721px;top:236px;width:477px;height:1px;background:#e5e5e5;"></div>
<div class="a" style="left:721px;top:254px;width:477px;height:1px;background:#e5e5e5;"></div>
<div class="a" style="left:721px;top:272px;width:477px;height:1px;background:#e5e5e5;"></div>
<div class="a" style="left:721px;top:290px;width:477px;height:1px;background:#e5e5e5;"></div>
<div class="a" style="left:721px;top:308px;width:477px;height:1px;background:#e5e5e5;"></div>
<div class="a" style="left:721px;top:326px;width:477px;height:1px;background:#e5e5e5;"></div>
<div class="a" style="left:721px;top:344px;width:477px;height:1px;background:#e5e5e5;"></div>
<div class="a" style="left:721px;top:362px;width:477px;height:1px;background:#e5e5e5;"></div>
<div class="a" style="left:721px;top:380px;width:477px;height:1px;background:#e5e5e5;"></div>
<div class="a" style="left:721px;top:398px;width:477px;height:1px;background:#e5e5e5;"></div>
<div class="tx" style="left:727px;top:128px;font-size:11.3px;">Name</div>
<div class="tx" style="left:855px;top:128px;font-size:11.3px;">Type</div>
<div class="tx" style="left:983px;top:128px;font-size:11.3px;">Value</div>
<svg style="left:740px;top:150px;" width="17" height="13" viewBox="0 0 17 13"><g fill="none" stroke="#1f3d66" stroke-linecap="round"><path d="M3.4 2.2Q0.6 6.5 3.4 10.8M9.6 2.2Q12.4 6.5 9.6 10.8" stroke-width="1.5"/><path d="M4.4 4.6L8.6 8.5M8.6 4.6L4.4 8.5" stroke-width="1.2"/><path d="M13.2 5.4H15.8M13.2 7.5H15.8" stroke-width="1.1"/></g></svg>
<div class="tx" style="left:761px;top:149px;font-size:11.3px;">temp</div>
<div class="tx" style="left:855px;top:149px;font-size:11.3px;">N/A</div>
<div class="a" style="left:981px;top:151px;font-family:Liberation Mono,monospace;font-size:12.4px;line-height:14px;color:#c80000;white-space:pre">N/A</div>
<svg style="left:740px;top:168px;" width="17" height="13" viewBox="0 0 17 13"><g fill="none" stroke="#1f3d66" stroke-linecap="round"><path d="M3.4 2.2Q0.6 6.5 3.4 10.8M9.6 2.2Q12.4 6.5 9.6 10.8" stroke-width="1.5"/><path d="M4.4 4.6L8.6 8.5M8.6 4.6L4.4 8.5" stroke-width="1.2"/><path d="M13.2 5.4H15.8M13.2 7.5H15.8" stroke-width="1.1"/></g></svg>
<div class="tx" style="left:761px;top:167px;font-size:11.3px;">a + 5</div>
<div class="tx" style="left:855px;top:167px;font-size:11.3px;">&lt;Integer-64&gt;</div>
<div class="a" style="left:981px;top:169px;font-family:Liberation Mono,monospace;font-size:12.4px;line-height:14px;color:#000;white-space:pre">13</div>
<div class="a" style="left:721px;top:183px;width:477px;height:18px;background:#cce8ff;border:1px solid #0078d7;border-bottom:none"></div>
<div class="a" style="left:721px;top:200px;width:477px;height:1px;background:#e5e5e5;"></div>
<svg style="left:741px;top:186px;" width="13" height="13" viewBox="0 0 13 13"><path d="M4.5 0.5h4v4h4v4h-4v4h-4v-4h-4v-4h4Z" fill="url(#pg)" stroke="#4a8a3a"/></svg>
<div class="a" style="left:761px;top:184px;width:87px;height:16px;overflow:hidden"><div class="tx" style="left:0;top:0;font-size:11.3px;font-style:italic">Add new expression</div></div>
<div class="a" style="left:716px;top:161px;width:393px;height:30px;background:transparent;border:6px solid #f40000"></div>
<div class="a" style="left:721px;top:416px;width:477px;height:5px;background:#f0f0f0;"></div>
<div class="a" style="left:1182px;top:421px;width:16px;height:375px;background:#f0f0f0;"></div>
<svg style="left:1186px;top:427px;" width="8" height="6" viewBox="0 0 8 6"><path d="M0 6L4 0L8 6Z" fill="#a0a0a0"/></svg>
<div class="a" style="left:704px;top:410px;width:9px;height:5px;background:#e2f4f4;border:1px solid #80d0d4"></div>
<div class="a" style="left:704px;top:517px;width:9px;height:5px;background:#eef6e6;border:1px solid #c4e0aa"></div>
<div class="a" style="left:715px;top:101px;width:1px;height:695px;background:#d9d9d9;"></div>
</body></html>
